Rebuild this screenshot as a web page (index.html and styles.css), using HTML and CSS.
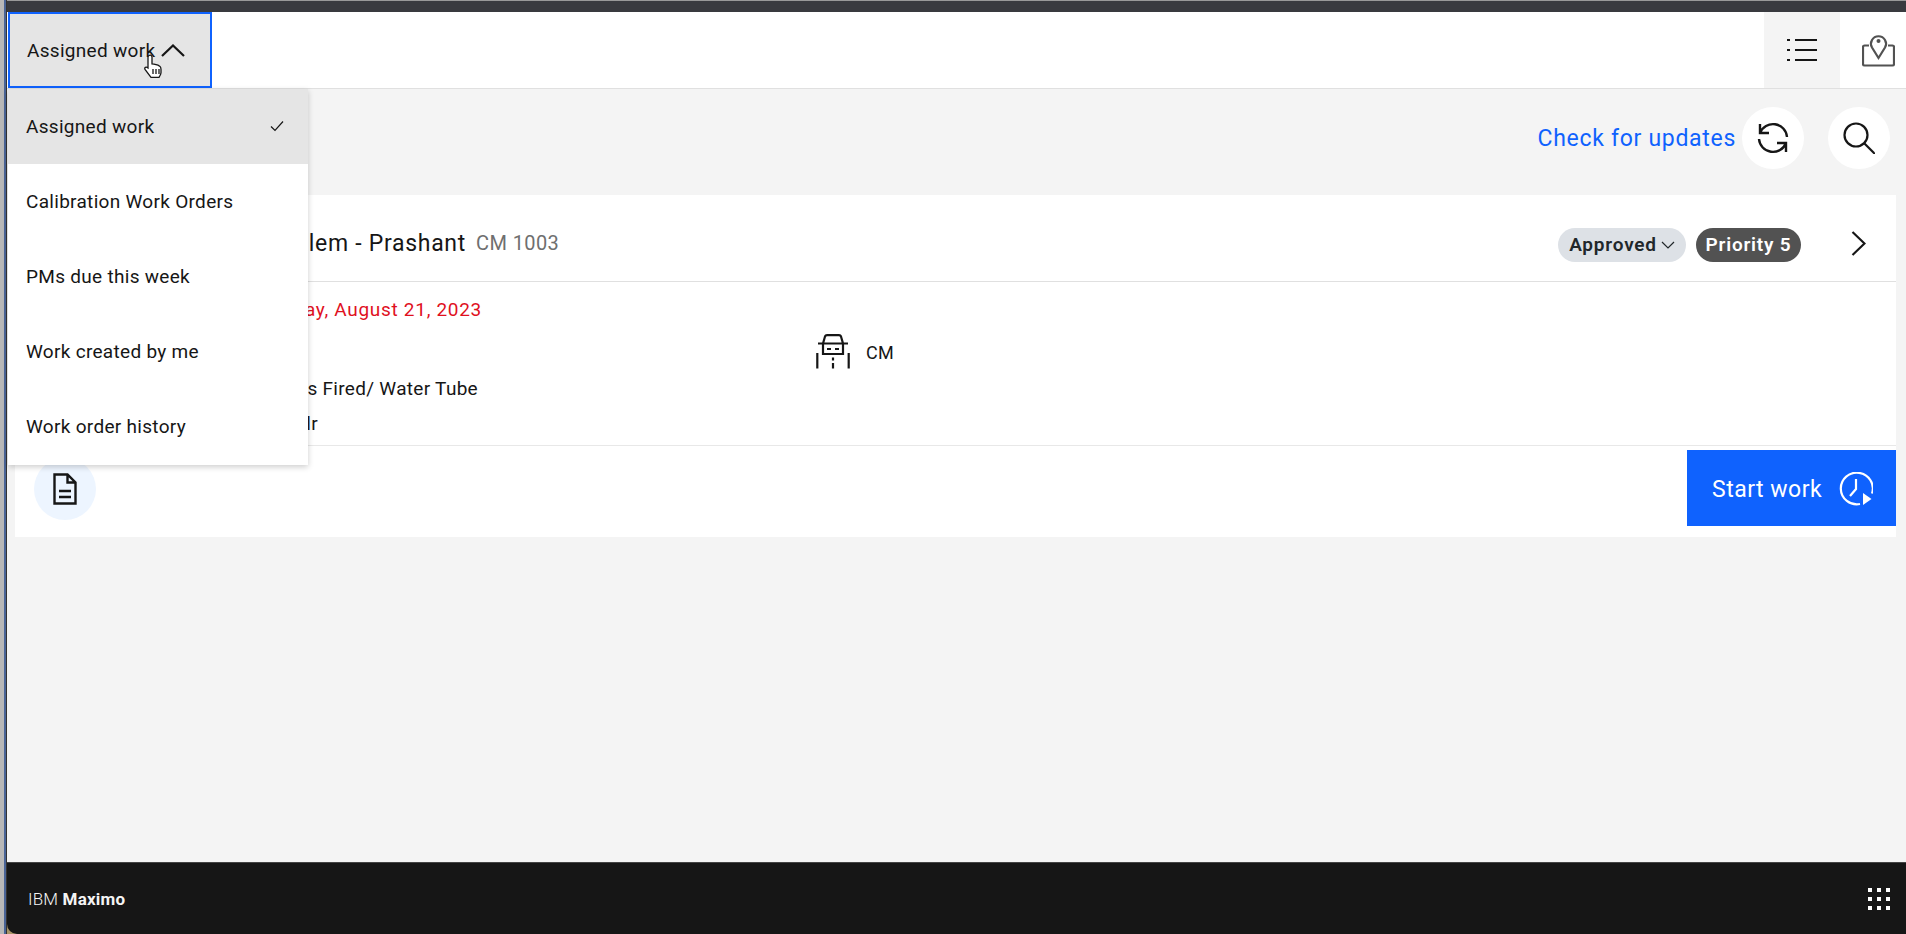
FILE: index.html
```html
<!DOCTYPE html>
<html>
<head>
	<title>Assigned work</title>
	<link rel="stylesheet" href="styles.css">
</head>
<body>
	<div class="window-edge"></div>
	<div class="app">
		<div class="title-strip"></div>
		<header class="topbar">
			<button class="view-select">
				<span>Assigned work</span>
				<svg class="view-chevron" viewBox="0 0 24 13"><path d="M1 12 12 1.500 23 12"/></svg>
			</button>
			<div class="view-tabs">
				<div class="view-tab view-tab-active">
					<svg class="icon-list" viewBox="0 0 30 24">
						<path d="M8 2h22M8 12h22M8 22h22" />
						<path class="dots" d="M0 2h3M0 12h3M0 22h3" />
					</svg>
				</div>
				<div class="view-tab">
					<svg class="icon-map" viewBox="0 0 33 34">
						<path d="M7 12.500H2.500a1.500 1.500 0 0 0-1.500 1.500v17a1.500 1.500 0 0 0 1.500 1.500h28a1.500 1.500 0 0 0 1.500-1.500v-17a1.500 1.500 0 0 0-1.500-1.500H26" />
						<path class="pin" d="M16.500 25 10 14.500a7.500 7.500 0 1 1 13 0z" />
						<circle cx="16.500" cy="8" r="2" />
					</svg>
				</div>
			</div>
		</header>

		<main class="content">
			<div class="toolbar">
				<a class="updates-link">Check for updates</a>
				<button class="round-btn">
					<svg class="icon-renew" viewBox="0 0 32 32">
						<path d="M3 11A14 14 0 0 1 30 15M3 2v9h9" />
						<path d="M29 21A14 14 0 0 1 2 17M29 30v-9h-9" />
					</svg>
				</button>
				<button class="round-btn">
					<svg class="icon-search" viewBox="0 0 32 32">
						<circle cx="13" cy="13" r="11.500" />
						<path d="M21.500 21.500 32 32" />
					</svg>
				</button>
			</div>

			<section class="card">
				<div class="card-head">
					<h3 class="card-title">Boiler problem - Prashant</h3>
					<span class="card-id">CM 1003</span>
					<span class="tag tag-status">Approved
						<svg class="tag-chevron" viewBox="0 0 14 8"><path d="M1 1l6 6 6-6"/></svg>
					</span>
					<span class="tag tag-priority">Priority 5</span>
					<svg class="icon-next" viewBox="0 0 15 25"><path d="M1.500 1 13.500 12.500 1.500 24"/></svg>
				</div>
				<div class="card-body">
					<div class="due-date">Monday, August 21, 2023</div>
					<div class="type-row">
						<svg class="icon-car" viewBox="0 0 36 36">
							<path d="M8 9.500 10 2.500Q10.500 1.200 12 1.200h12q1.500 0 2 1.300L28 9.500V20H8zM3 9.500h30" />
							<path d="M12 15h4M20 15h4M2.300 19v15.500M33.700 19v15.500M18 23.500v3M18 29v5.500" />
						</svg>
						<span>CM</span>
					</div>
					<div class="body-line">Boiler, Natural Gas Fired/ Water Tube</div>
					<div class="body-line body-line-last">Blr</div>
				</div>
				<div class="card-foot">
					<div class="doc-btn">
						<svg class="icon-doc" viewBox="0 0 24 32">
							<path d="M1.500 1.500h13l8 8v21h-21zM14.500 1.500v8h8M6 18h12M6 24h12" />
						</svg>
					</div>
					<button class="start-btn">
						Start work
						<svg class="icon-start" viewBox="0 0 34 34">
							<path d="M21 32A16 15.800 0 1 1 33 21.500M17 7v10l-6 7" />
							<path class="fill" d="M24 21l8.500 6-8.500 6z" />
						</svg>
					</button>
				</div>
			</section>
		</main>

		<footer class="footer">
			<span class="brand">IBM <b>Maximo</b></span>
			<div class="apps-grid">
				<i></i><i></i><i></i><i></i><i></i><i></i><i></i><i></i><i></i>
			</div>
		</footer>

		<ul class="view-menu">
			<li class="view-menu-item selected">Assigned work
				<svg class="icon-check" viewBox="0 0 14 12"><path d="M1 6.500 5 10.500 13 1.500"/></svg>
			</li>
			<li class="view-menu-item">Calibration Work Orders</li>
			<li class="view-menu-item">PMs due this week</li>
			<li class="view-menu-item">Work created by me</li>
			<li class="view-menu-item">Work order history</li>
		</ul>

		<svg class="cursor" viewBox="0 0 20 26">
			<path d="M6 1.500c1.500-1 3 0 3 1.500v7l2 .2 2 .4 2 .6 2 1.200c1 1 1 2 1 3v3c0 2-1 3-2 5H8l-6-8c-1-2 1-3 3-1.500V3c0-.7.400-1.100 1-1.500z" />
			<path d="M10 15v5M13 15v5M16 15v5" />
		</svg>
	</div>
</body>
</html>
```

FILE: styles.css
```css
* {
	box-sizing: border-box;
}

html,
body {
	height: 100%;
}

body {
	margin: 0;
	display: flex;
	height: 934px;
	overflow: hidden;
	background-color: #f4f4f4;
	font-family: Roboto, "Noto Sans", Arial, sans-serif;
	color: #161616;
}

svg {
	display: block;
	fill: none;
	stroke: currentColor;
}

button {
	font: inherit;
	color: inherit;
	border: none;
	padding: 0;
	cursor: pointer;
}

.window-edge {
	width: 7px;
	flex-shrink: 0;
	background: linear-gradient(to right, #b8b8b8 0, #b8b8b8 4px, #4a6496 4px, #4a6496 6px, #333 6px);
}

.app {
	position: relative;
	flex: 1;
	min-width: 0;
	display: flex;
	flex-direction: column;
	background-color: #a89468;
}

.title-strip {
	height: 12px;
	flex-shrink: 0;
	background-color: #393a3f;
	border-top: 1px solid #999;
}

/* top bar */
.topbar {
	height: 77px;
	flex-shrink: 0;
	display: flex;
	justify-content: space-between;
	background-color: #fff;
	border-bottom: 1px solid #e0e0e0;
}

.view-select {
	width: 204px;
	margin-left: 1px;
	display: flex;
	align-items: center;
	gap: 6px;
	padding-left: 17px;
	background-color: #e5e5e5;
	border: 2px solid #0f62fe;
	font-size: 19px;
	letter-spacing: 0.3px;
}

.view-chevron {
	width: 24px;
	height: 13px;
	stroke-width: 2.200;
}

.view-tabs {
	display: flex;
}

.view-tab {
	width: 66px;
	display: flex;
	align-items: center;
	justify-content: flex-start;
	padding-left: 22px;
}

.view-tab-active {
	width: 76px;
	background-color: #f4f4f4;
	padding-left: 23px;
}

.icon-list {
	width: 30px;
	height: 24px;
	stroke-width: 2;
}

.icon-map {
	width: 33px;
	height: 34px;
	stroke: #525252;
	stroke-width: 2.200;
}

.icon-map circle {
	fill: #525252;
	stroke: none;
}

/* toolbar */
.toolbar {
	height: 106px;
	flex-shrink: 0;
	display: flex;
	align-items: center;
	justify-content: flex-end;
	padding: 0 16px 8px 0;
	background-color: #f4f4f4;
}

.updates-link {
	color: #0f62fe;
	font-size: 23px;
	letter-spacing: 0.7px;
	margin-right: 6px;
}

.round-btn {
	width: 62px;
	height: 62px;
	border-radius: 50%;
	background-color: #fff;
	display: flex;
	align-items: center;
	justify-content: center;
}

.round-btn + .round-btn {
	margin-left: 24px;
}

.icon-renew {
	width: 32px;
	height: 32px;
	stroke-width: 2.400;
}

.icon-search {
	width: 32px;
	height: 32px;
	stroke-width: 2.200;
}

/* card */
.content {
	flex: 1;
	background-color: #f4f4f4;
}

.card {
	margin: 0 10px 0 8px;
	background-color: #fff;
}

.card-head {
	height: 87px;
	display: flex;
	align-items: center;
	padding: 10px 30px 0 19px;
	border-bottom: 1px solid #e0e0e0;
}

.card-title {
	margin: 0;
	font-size: 23px;
	font-weight: 400;
	letter-spacing: 0.7px;
	width: 432px;
	text-align: right;
	white-space: nowrap;
}

.card-id {
	font-size: 20px;
	color: #6f6f6f;
	margin-left: 10px;
	letter-spacing: 0.4px;
	margin-right: auto;
}

.tag {
	height: 34px;
	margin-top: 3px;
	border-radius: 17px;
	display: flex;
	align-items: center;
	justify-content: center;
	font-size: 19px;
	font-weight: 600;
	letter-spacing: 0.8px;
}

.tag-status {
	width: 128px;
	gap: 4px;
	background-color: #dde1e6;
	color: #21272a;
}

.tag-chevron {
	width: 14px;
	height: 8px;
	stroke-width: 1.200;
}

.tag-priority {
	width: 105px;
	margin-left: 10px;
	background-color: #525252;
	color: #fff;
}

.icon-next {
	width: 15px;
	height: 25px;
	margin-left: 50px;
	stroke-width: 2.200;
}

.card-body {
	height: 164px;
	padding: 14px 0 0 19px;
	border-bottom: 1px solid #e8e8e8;
	font-size: 19px;
	letter-spacing: 0.3px;
}

.due-date {
	width: 448px;
	height: 28px;
	line-height: 28px;
	color: #e0101e;
	letter-spacing: 0.7px;
	text-align: right;
	white-space: nowrap;
}

.type-row {
	height: 52px;
	padding: 3px 0 0 781px;
	display: flex;
	align-items: center;
	gap: 15px;
	font-size: 18px;
}

.type-row span {
	padding-top: 2px;
}

.icon-car {
	width: 36px;
	height: 36px;
	stroke-width: 2.200;
}

.body-line {
	width: 444px;
	height: 26px;
	line-height: 26px;
	text-align: right;
	white-space: nowrap;
}

.body-line-last {
	width: 284px;
	margin-top: 9px;
}

.card-foot {
	height: 91px;
	display: flex;
	justify-content: space-between;
	align-items: flex-start;
	padding: 4px 0 0 19px;
}

.doc-btn {
	width: 62px;
	height: 62px;
	margin-top: 8px;
	border-radius: 50%;
	background-color: #edf5ff;
	display: flex;
	align-items: center;
	justify-content: center;
}

.icon-doc {
	width: 24px;
	height: 32px;
	stroke-width: 2.400;
}

.start-btn {
	width: 209px;
	height: 76px;
	display: flex;
	align-items: center;
	gap: 17px;
	padding: 2px 0 0 25px;
	background-color: #0f62fe;
	color: #fff;
	font-size: 23px;
	letter-spacing: 0.5px;
}

.icon-start {
	width: 34px;
	height: 34px;
	stroke-width: 2.200;
}

.icon-start .fill {
	fill: #fff;
	stroke: none;
}

/* footer */
.footer {
	height: 72px;
	flex-shrink: 0;
	display: flex;
	align-items: center;
	justify-content: space-between;
	padding: 0 16px 0 21px;
	background-color: #161616;
	border-top: 1px solid #444;
	border-bottom-left-radius: 10px;
	color: #f4f4f4;
}

.brand {
	font-size: 17px;
	font-weight: 300;
	letter-spacing: 0.2px;
}

.brand b {
	font-weight: 700;
}

.apps-grid {
	display: grid;
	grid-template-columns: repeat(3, 4px);
	gap: 5px;
}

.apps-grid i {
	height: 4px;
	background-color: #fff;
}

/* dropdown list, sits over the card */
.view-menu {
	position: absolute;
	left: 1px;
	top: 89px;
	width: 300px;
	margin: 0;
	padding: 0 0 1px;
	list-style: none;
	background-color: #fff;
	box-shadow: 0 2px 6px rgba(0, 0, 0, 0.2);
}

.view-menu-item {
	height: 75px;
	display: flex;
	align-items: center;
	justify-content: space-between;
	padding: 0 24px 1px 18px;
	font-size: 19px;
	letter-spacing: 0.3px;
}

.selected {
	background-color: #e5e5e5;
}

.icon-check {
	width: 14px;
	height: 12px;
	stroke-width: 1.200;
}

.cursor {
	position: absolute;
	left: 136px;
	top: 54px;
	width: 20px;
	height: 26px;
	fill: #fff;
	stroke: #161616;
	stroke-width: 1.300;
}
```
